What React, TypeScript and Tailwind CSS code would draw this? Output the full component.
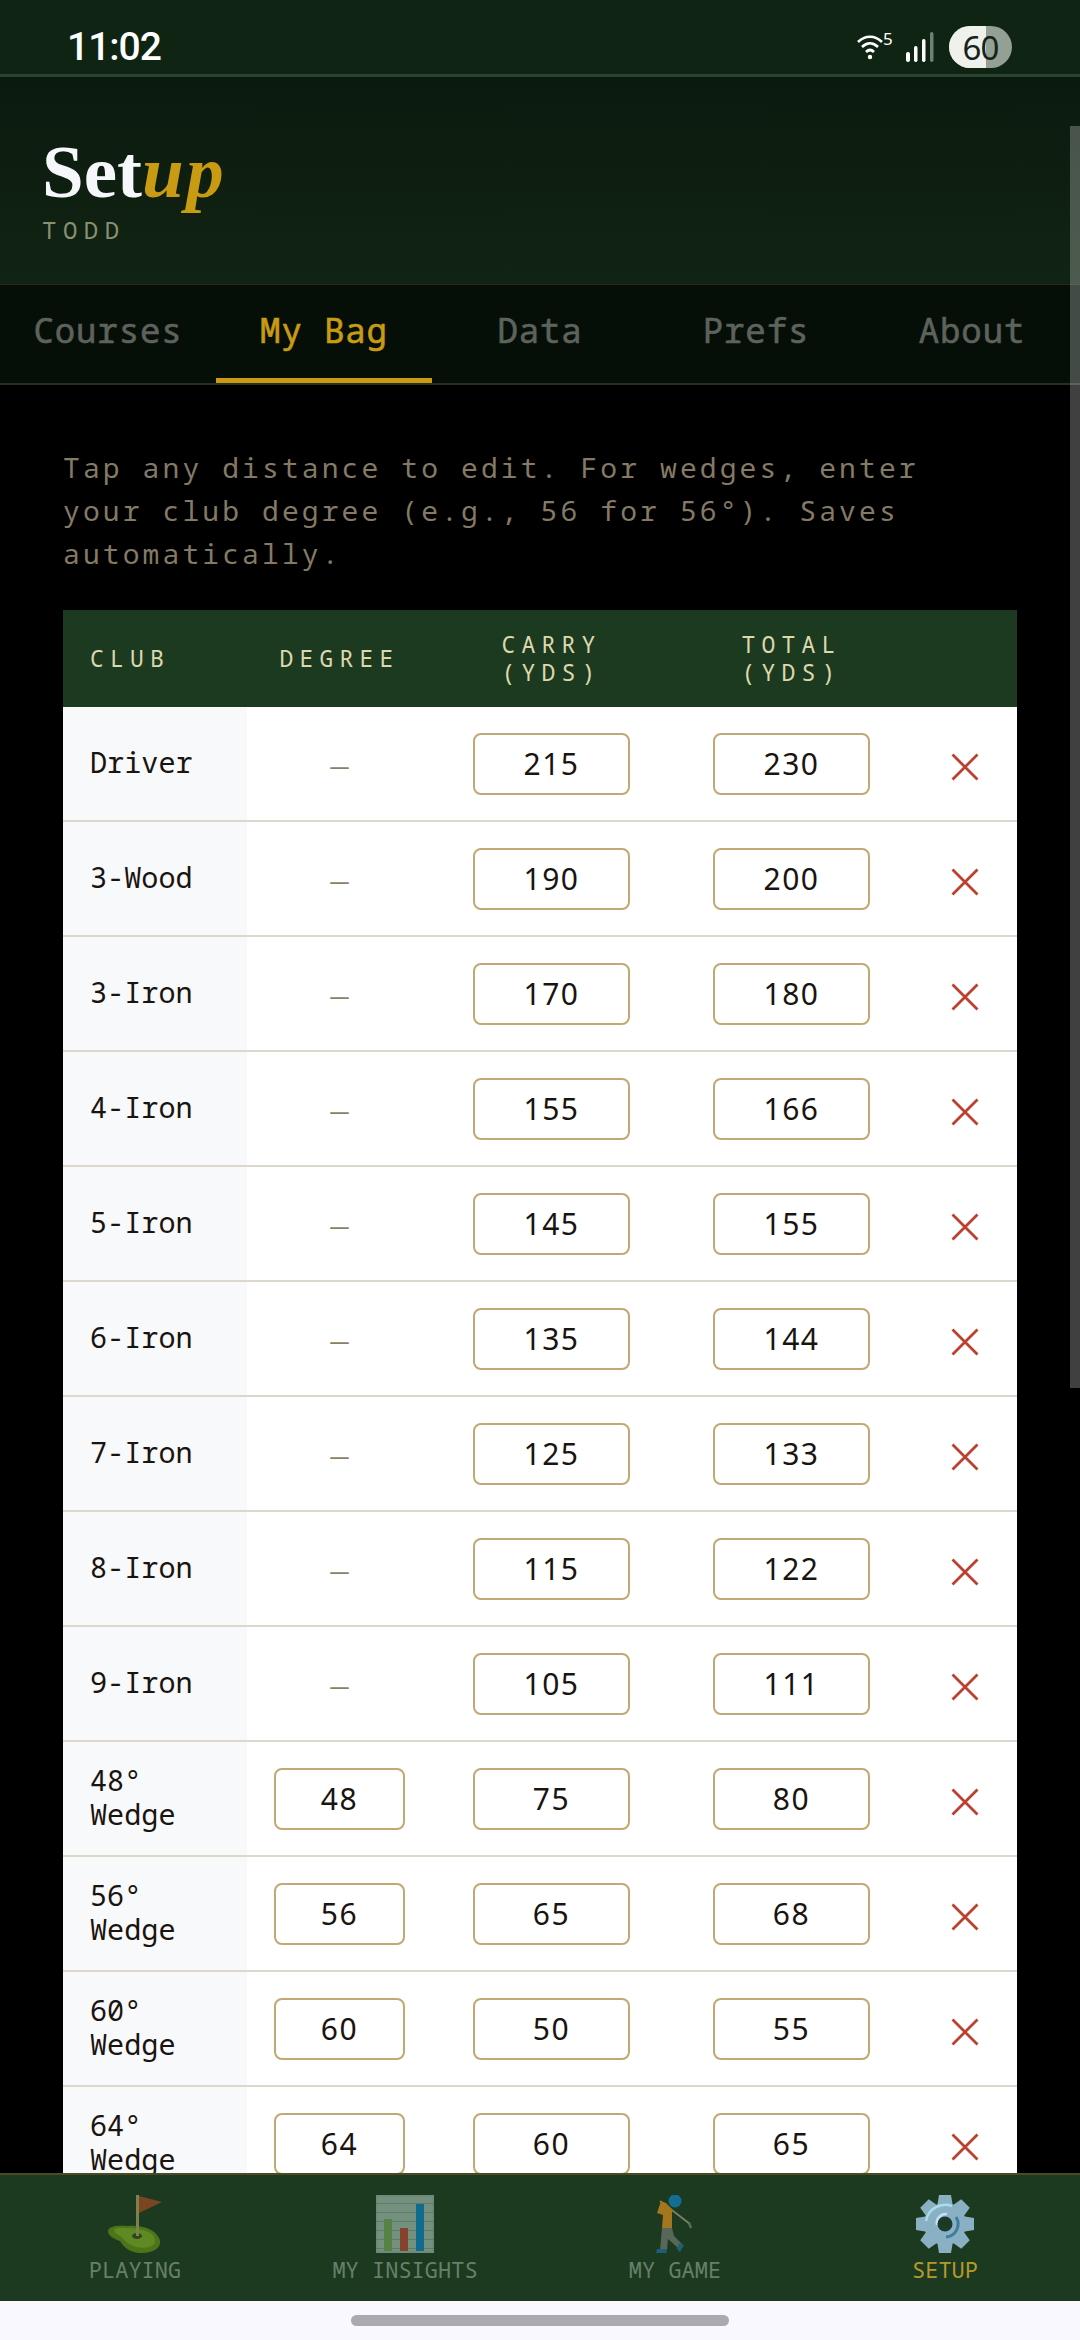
const mono = "font-['Noto_Sans_Mono','DejaVu_Sans_Mono','Liberation_Mono',monospace]";

const clubs: [string, string | null, string, string][] = [
  ["Driver", null, "215", "230"],
  ["3-Wood", null, "190", "200"],
  ["3-Iron", null, "170", "180"],
  ["4-Iron", null, "155", "166"],
  ["5-Iron", null, "145", "155"],
  ["6-Iron", null, "135", "144"],
  ["7-Iron", null, "125", "133"],
  ["8-Iron", null, "115", "122"],
  ["9-Iron", null, "105", "111"],
  ["48° Wedge", "48", "75", "80"],
  ["56° Wedge", "56", "65", "68"],
  ["60° Wedge", "60", "50", "55"],
  ["64° Wedge", "64", "60", "65"],
];

const cols = "grid grid-cols-[184px_185px_239px_241px_105px]";

function Field({ value, wide = true }: { value: string; wide?: boolean }) {
  return (
    <div
      className={`${wide ? "w-[157px]" : "w-[131px]"} h-[62px] rounded-[8px] border-[2px] border-[#c2a872] bg-white flex items-center justify-center font-['Noto_Sans',sans-serif] text-[30px] tracking-[1.5px] text-[#1a1410]`}
    >
      {value}
    </div>
  );
}

function Cross() {
  return (
    <svg width="28" height="28" viewBox="0 0 28 28" className="mt-[6px]">
      <path d="M1.5 1.5 L26.5 26.5 M26.5 1.5 L1.5 26.5" stroke="#bd3f2f" strokeWidth="2.8" fill="none" />
    </svg>
  );
}

function Row({ c }: { c: [string, string | null, string, string] }) {
  return (
    <div className={`${cols} h-[115px] border-b-[2px] border-[#ddd8cc] bg-white`}>
      <div className={`bg-[#f8f9fb] flex items-center pl-[27px] pr-[20px] pb-[4px] ${mono} text-[28.5px] leading-[34px] text-[#1a1410]`}>
        <span>{c[0]}</span>
      </div>
      <div className="flex items-center justify-center">
        {c[1] ? (
          <Field value={c[1]} wide={false} />
        ) : (
          <span className="font-['Noto_Sans',sans-serif] font-medium text-[20px] text-[#8a7f68] mt-[4px]">—</span>
        )}
      </div>
      <div className="flex items-center justify-center">
        <Field value={c[2]} />
      </div>
      <div className="flex items-center justify-center">
        <Field value={c[3]} />
      </div>
      <div className="flex items-center justify-center">
        <Cross />
      </div>
    </div>
  );
}

function FlagIcon() {
  return (
    <svg width="58" height="58" viewBox="0 0 58 58">
      <path d="M2 36 C2 31 12 30 22 31 C34 30 48 33 53 43 C57 51 50 57 38 58 C26 59 18 53 14 46 C8 44 2 41 2 36 Z" fill="#4d7419" />
      <path d="M8 34 C16 32 24 33 32 34 C42 35 50 40 49 47 C48 52 38 54 30 52 C22 50 18 44 14 41 C10 39 8 37 8 34 Z" fill="#5d8a22" />
      <ellipse cx="31" cy="41" rx="5" ry="3" fill="#33441f" />
      <rect x="30" y="0" width="3" height="41" fill="#80804f" />
      <path d="M33 1 L56 7 L33 18 Z" fill="#7c4521" />
    </svg>
  );
}

function ChartIcon() {
  return (
    <svg width="58" height="58" viewBox="0 0 58 58">
      <rect x="0" y="0" width="58" height="58" fill="#6e8a7b" />
      <rect x="2" y="2" width="54" height="54" fill="#74907f" />
      <path d="M0 8.5 H58 M0 17.5 H58 M0 26.5 H58 M0 35.5 H58 M0 44.5 H58 M0 53.5 H58" stroke="#5e7b6a" strokeWidth="1.2" />
      <rect x="8" y="24" width="8" height="32" fill="#568343" />
      <rect x="24" y="33" width="8" height="23" fill="#84432a" />
      <rect x="40" y="9" width="8" height="47" fill="#0f6c8e" />
    </svg>
  );
}

function GolferIcon() {
  return (
    <svg width="38" height="58" viewBox="0 0 38 58">
      <path d="M4 6 L34 29" stroke="#7e8163" strokeWidth="1.8" />
      <path d="M33 28 L35 33" stroke="#5d6a58" strokeWidth="2.5" />
      <circle cx="19" cy="6" r="6.5" fill="#146e94" />
      <path d="M5 6 L10 8 L16 14 L16 33 L6 33 L7 20 L1 18 Z" fill="#a4761d" />
      <path d="M6 33 H16 L18 41 L26 49 L22 53 L12 44 L11 55 L4 55 Z" fill="#59665a" />
      <path d="M1 54 H10 L11 58 H0 Z" fill="#1d5f78" />
      <path d="M23 48 L28 50 L24 57 L21 54 Z" fill="#1d5f78" />
    </svg>
  );
}

function GearIcon() {
  const teeth = [0, 45, 90, 135, 180, 225, 270, 315];
  return (
    <svg width="58" height="58" viewBox="0 0 58 58">
      {teeth.map((a) => (
        <path key={a} d="M23 0 H35 L37 12 H21 Z" fill="#8ab0c4" transform={`rotate(${a} 29 29)`} />
      ))}
      <circle cx="29" cy="29" r="21" fill="#8ab0c4" />
      <path d="M10 26 A19.5 19.5 0 0 1 36 11" stroke="#a9dcec" strokeWidth="2.5" fill="none" />
      <path d="M21 30 A9 9 0 0 1 31 19" stroke="#c2e3ee" strokeWidth="2.5" fill="none" />
      <path d="M40 22 A13 13 0 0 1 30 42" stroke="#3d7f9c" strokeWidth="3" fill="none" />
      <circle cx="29" cy="29" r="7.5" fill="#1c3a2f" />
      <circle cx="29" cy="29" r="4.5" fill="#1c3a1f" />
    </svg>
  );
}

const navItems = [
  { label: "PLAYING", icon: <FlagIcon />, active: false },
  { label: "MY INSIGHTS", icon: <ChartIcon />, active: false },
  { label: "MY GAME", icon: <GolferIcon />, active: false },
  { label: "SETUP", icon: <GearIcon />, active: true },
];

export default function App() {
  return (
    <div className="relative w-[1080px] h-[2340px] flex flex-col bg-black overflow-hidden">
      {/* Status bar */}
      <div className="h-[77px] shrink-0 bg-[#102414] border-b-[3px] border-[#2b4430] flex items-center justify-between pl-[67px] pr-[68px] pt-[20px]">
        <span className="font-['Roboto',sans-serif] font-medium text-[39px] leading-none text-white tracking-[-1px]">11:02</span>
        <div className="flex items-center">
          <div className="relative w-[36px] h-[28px]">
            <svg width="26" height="26" viewBox="0 0 26 26" className="absolute left-0 top-[1px]">
              <path d="M1 8 C8 1 18 1 25 8" stroke="#fff" strokeWidth="2.6" fill="none" />
              <path d="M5 13 C10 8 16 8 21 13" stroke="#fff" strokeWidth="2.6" fill="none" />
              <path d="M9 18 C11.5 15.5 14.5 15.5 17 18" stroke="#fff" strokeWidth="2.6" fill="none" />
              <circle cx="13" cy="23" r="2.2" fill="#fff" />
            </svg>
            <span className="absolute left-[26px] top-[-4px] font-['Noto_Sans',sans-serif] text-[17px] leading-[20px] text-white">5</span>
          </div>
          <svg width="28" height="30" viewBox="0 0 28 30" className="ml-[13px]">
            <rect x="0" y="20" width="4" height="10" rx="2" fill="#fff" />
            <rect x="8" y="14" width="3.5" height="16" rx="1.7" fill="#fff" />
            <rect x="16" y="7" width="3.5" height="23" rx="1.7" fill="#fff" />
            <rect x="24" y="0" width="3.5" height="30" rx="1.7" fill="#6f7f70" />
          </svg>
          <div className="relative ml-[15px] w-[63px] h-[42px] rounded-full overflow-hidden bg-[#95a095] flex items-center justify-center">
            <div className="absolute left-0 top-0 bottom-0 w-[37px] bg-[#eef1ec]" />
            <span className="relative font-['Noto_Sans',sans-serif] text-[33px] leading-none text-[#16231a] tracking-[-1px]">60</span>
          </div>
        </div>
      </div>

      {/* Header */}
      <div className="h-[207px] shrink-0 bg-gradient-to-b from-[#0b1a0e] to-[#112413] pl-[42px] pt-[55px]">
        <div className="font-['Liberation_Serif',serif] font-bold text-[75px] leading-[80px] text-[#f5f7fa]">
          Set<em className="text-[#c89b12] tracking-[2.5px]">up</em>
        </div>
        <div className={`${mono} text-[24px] leading-[30px] tracking-[6.5px] text-[#8a8f70] mt-[3px]`}>TODD</div>
      </div>

      {/* Tabs */}
      <div className="h-[101px] shrink-0 grid grid-cols-5 bg-[#050f08] border-t-[1px] border-[#2b2a10] border-b-[2px] border-b-[#25301f]">
        {["Courses", "My Bag", "Data", "Prefs", "About"].map((t) => (
          <div
            key={t}
            className={`flex items-center justify-center ${mono} text-[34px] tracking-[0.9px] pb-[2px] [-webkit-text-stroke:0.6px_currentColor] border-b-[5px] ${
              t === "My Bag" ? "text-[#c89b12] border-[#c89b12]" : "text-[#5e625c] border-transparent"
            }`}
          >
            {t}
          </div>
        ))}
      </div>

      {/* Content */}
      <div className="flex-1 min-h-0 overflow-hidden bg-black px-[63px] pt-[61px]">
        <p className={`${mono} max-w-[880px] text-[28px] leading-[43px] tracking-[3.1px] text-[#847a65]`}>
          Tap any distance to edit. For wedges, enter your club degree (e.g., 56 for 56°). Saves automatically.
        </p>
        <div className="mt-[35px]">
          <div className={`${cols} h-[97px] bg-[#1c3a1f] ${mono} text-[23px] leading-[28px] tracking-[6.2px] text-[#ddd7ae] pb-[2px]`}>
            <div className="flex items-center pl-[27px]">CLUB</div>
            <div className="flex items-center justify-center text-center">DEGREE</div>
            <div className="flex items-center justify-center text-center">
              <span>CARRY<br />(YDS)</span>
            </div>
            <div className="flex items-center justify-center text-center">
              <span>TOTAL<br />(YDS)</span>
            </div>
            <div />
          </div>
          {clubs.map((c) => (
            <Row key={c[0]} c={c} />
          ))}
        </div>
      </div>

      {/* Bottom nav */}
      <div className="h-[128px] shrink-0 bg-[#1c3a1f] border-t-[2px] border-[#4a4a24] grid grid-cols-4">
        {navItems.map((n) => (
          <div key={n.label} className="flex flex-col items-center pt-[20px]">
            <div className="h-[58px] flex items-center justify-center">{n.icon}</div>
            <span
              className={`${mono} text-[22px] leading-[26px] mt-[3px] ${
                n.active ? "text-[#b59a2a]" : "text-[#66806a]"
              }`}
            >
              {n.label}
            </span>
          </div>
        ))}
      </div>

      {/* Gesture bar */}
      <div className="h-[39px] shrink-0 bg-[#f8f8fe] flex justify-center pt-[14px]">
        <div className="w-[378px] h-[11px] rounded-full bg-[#abaab0]" />
      </div>

      {/* Scrollbar overlay */}
      <div className="absolute right-0 top-[126px] w-[10px] h-[1262px] bg-white/25" />
    </div>
  );
}
